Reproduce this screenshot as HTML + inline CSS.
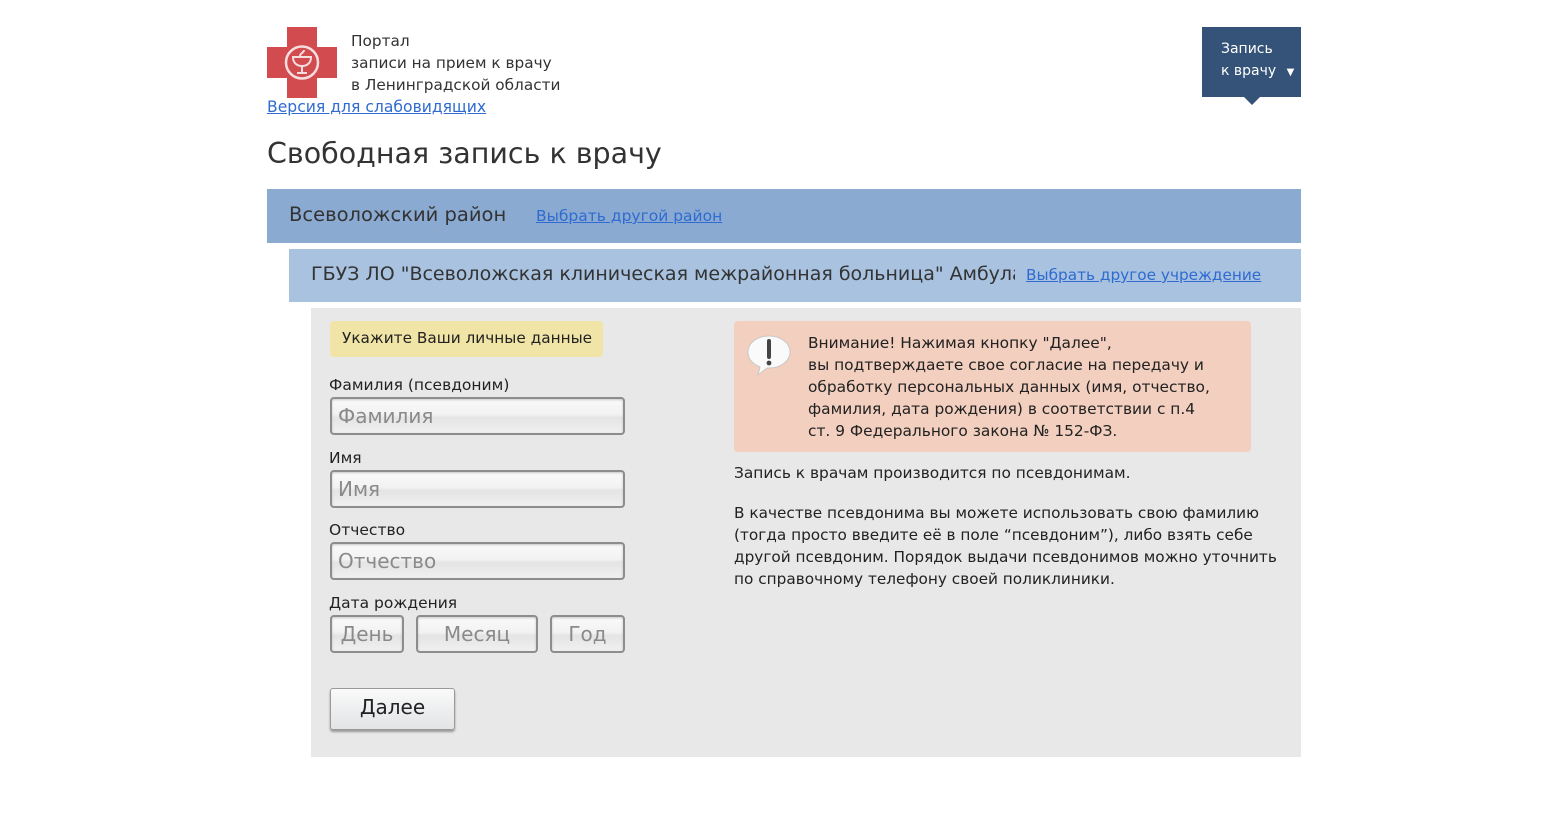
<!DOCTYPE html>
<html><head><meta charset="utf-8"><style>
*{margin:0;padding:0;box-sizing:border-box}
body{width:1560px;height:826px;background:#fff;font-family:"DejaVu Sans","Liberation Sans",sans-serif;color:#333;position:relative;overflow:hidden}
.a{position:absolute;white-space:nowrap}
a{color:#2f6bd0;text-decoration:underline}
.inp{position:absolute;border:2px solid #8d8d8d;border-radius:4px;background:linear-gradient(#fafafa,#f2f2f2 45%,#e4e4e4 55%,#f0f0f0);color:#8a8a8a;font-size:20px;box-shadow:inset 0 1px 2px rgba(0,0,0,.2)}
.lbl{position:absolute;font-size:15.5px;color:#222}
</style></head><body>
<svg class="a" style="left:267px;top:27px" width="70" height="71" viewBox="0 0 70 71">
<path d="M20 0h30v20h20v31h-20v20h-30v-20h-20v-31h20z" fill="#d24b4e"/>
<circle cx="35" cy="35.5" r="16" fill="none" stroke="#f6dede" stroke-width="2.5"/>
<path d="M26 30h18c0 6-4 9-9 9s-9-3-9-9z" fill="none" stroke="#f6dede" stroke-width="2"/>
<path d="M35 39v7M30 46h10M33 29c0-3 4-3 4-6" fill="none" stroke="#f6dede" stroke-width="2"/>
</svg>
<div class="a" style="left:351px;top:30px;font-size:15.3px;line-height:22px;color:#333">Портал<br>записи на прием к врачу<br>в Ленинградской области</div>
<a class="a" style="left:267px;top:98px;font-size:15.6px" href="#">Версия для слабовидящих</a>
<div class="a" style="left:1202px;top:27px;width:99px;height:70px;background:#355378;color:#fff;font-size:14px;line-height:22px;padding:11px 0 0 19px">Запись<br>к врачу <span style="font-size:10px;margin-left:6px">▼</span></div>
<div class="a" style="left:1244px;top:97px;width:0;height:0;border-left:8px solid transparent;border-right:8px solid transparent;border-top:8px solid #355378"></div>
<div class="a" style="left:267px;top:137px;font-size:28.5px;color:#333">Свободная запись к врачу</div>
<div class="a" style="left:267px;top:189px;width:1034px;height:54px;background:#8aaad2"></div>
<div class="a" style="left:289px;top:203px;font-size:19.5px;color:#333">Всеволожский район</div>
<a class="a" style="left:536px;top:207px;font-size:15.5px" href="#">Выбрать другой район</a>
<div class="a" style="left:289px;top:249px;width:1012px;height:53px;background:#a8c2e0"></div>
<div class="a" style="left:311px;top:263px;width:704px;overflow:hidden;font-size:19px;color:#333">ГБУЗ ЛО "Всеволожская клиническая межрайонная больница" Амбулатория</div>
<a class="a" style="left:1026px;top:266px;font-size:15.3px" href="#">Выбрать другое учреждение</a>
<div class="a" style="left:311px;top:308px;width:990px;height:449px;background:#e8e8e8"></div>
<div class="a" style="left:330px;top:321px;width:273px;height:36px;background:#f0e4a6;border-radius:4px;font-size:15.3px;padding:8px 0 0 12px;color:#222">Укажите Ваши личные данные</div>
<div class="lbl" style="left:329px;top:376px">Фамилия (псевдоним)</div>
<div class="inp" style="left:330px;top:397px;width:295px;height:38px;padding:5px 0 0 6px">Фамилия</div>
<div class="lbl" style="left:329px;top:449px">Имя</div>
<div class="inp" style="left:330px;top:470px;width:295px;height:38px;padding:5px 0 0 6px">Имя</div>
<div class="lbl" style="left:329px;top:521px">Отчество</div>
<div class="inp" style="left:330px;top:542px;width:295px;height:38px;padding:5px 0 0 6px">Отчество</div>
<div class="lbl" style="left:329px;top:594px">Дата рождения</div>
<div class="inp" style="left:330px;top:615px;width:74px;height:38px;padding-top:5px;text-align:center">День</div>
<div class="inp" style="left:416px;top:615px;width:122px;height:38px;padding-top:5px;text-align:center">Месяц</div>
<div class="inp" style="left:550px;top:615px;width:75px;height:38px;padding-top:5px;text-align:center">Год</div>
<div class="a" style="left:330px;top:688px;width:125px;height:42px;border:1px solid #9a9a9a;border-radius:3px;background:linear-gradient(#fafafa,#e2e4e6);box-shadow:0 2px 2px rgba(0,0,0,.35);font-size:20px;color:#222;text-align:center;padding-top:6px">Далее</div>
<div class="a" style="left:734px;top:321px;width:517px;height:131px;background:#f2cfbf;border-radius:4px"></div>
<svg class="a" style="left:745px;top:333px" width="48" height="44" viewBox="0 0 48 44">
<path d="M24 3C12 3 3 10 3 19c0 7 5 12 12 15l-2 8 9-7h2c12 0 21-7 21-16S36 3 24 3z" fill="#fafafa" stroke="#c8c8c8"/>
<path d="M24 8v16" stroke="#444" stroke-width="4" stroke-linecap="round"/><circle cx="24" cy="30" r="2.4" fill="#444"/>
</svg>
<div class="a" style="left:808px;top:332px;font-size:15.4px;line-height:22px;color:#222">Внимание! Нажимая кнопку "Далее",<br>вы подтверждаете свое согласие на передачу и<br>обработку персональных данных (имя, отчество,<br>фамилия, дата рождения) в соответствии с п.4<br>ст. 9 Федерального закона № 152-ФЗ.</div>
<div class="a" style="left:734px;top:464px;font-size:15.4px;color:#222">Запись к врачам производится по псевдонимам.</div>
<div class="a" style="left:734px;top:502px;font-size:15.3px;line-height:22px;color:#222">В качестве псевдонима вы можете использовать свою фамилию<br>(тогда просто введите её в поле “псевдоним”), либо взять себе<br>другой псевдоним. Порядок выдачи псевдонимов можно уточнить<br>по справочному телефону своей поликлиники.</div>
</body></html>
